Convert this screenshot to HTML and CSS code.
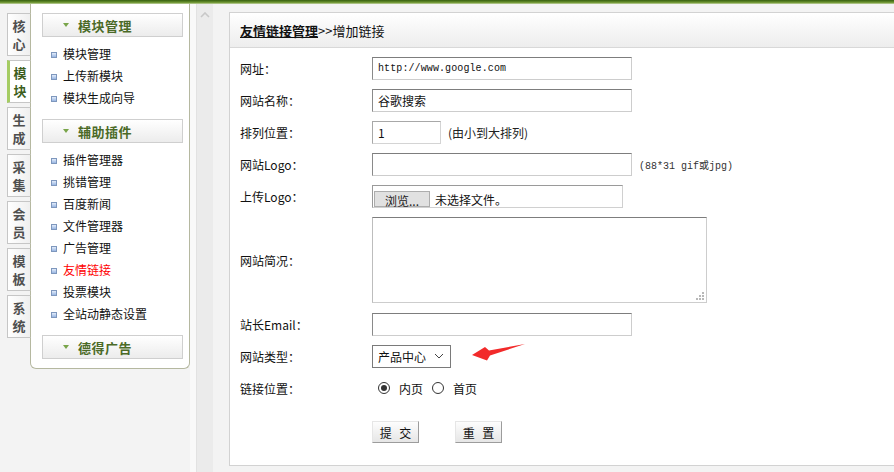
FILE: index.html
```html
<!DOCTYPE html>
<html lang="zh-CN">
<head>
    <meta charset="utf-8">
    <title>增加链接</title>
    <link rel="stylesheet" href="styles.css">
</head>
<body>
    <div class="topbar"></div>

    <div class="layout">
        <div class="side">
            <ul class="tabs">
                <li class="tab"><span>核</span><span>心</span></li>
                <li class="tab active"><span>模</span><span>块</span></li>
                <li class="tab"><span>生</span><span>成</span></li>
                <li class="tab"><span>采</span><span>集</span></li>
                <li class="tab"><span>会</span><span>员</span></li>
                <li class="tab"><span>模</span><span>板</span></li>
                <li class="tab"><span>系</span><span>统</span></li>
            </ul>

            <div class="menu">
                <div class="menu-head"><span class="caret"></span>模块管理</div>
                <ul class="menu-list">
                    <li>模块管理</li>
                    <li>上传新模块</li>
                    <li>模块生成向导</li>
                </ul>

                <div class="menu-head"><span class="caret"></span>辅助插件</div>
                <ul class="menu-list">
                    <li>插件管理器</li>
                    <li>挑错管理</li>
                    <li>百度新闻</li>
                    <li>文件管理器</li>
                    <li>广告管理</li>
                    <li class="current">友情链接</li>
                    <li>投票模块</li>
                    <li>全站动静态设置</li>
                </ul>

                <div class="menu-head"><span class="caret"></span>德得广告</div>
            </div>
        </div>

        <div class="splitter">
            <div class="split-light"></div>
            <div class="split-bar">
                <svg width="10" height="6" viewBox="0 0 10 6"><path d="M1 5 L5 1 L9 5" fill="none" stroke="#c8c8c8" stroke-width="1.6"/></svg>
            </div>
        </div>

        <div class="main">
            <div class="panel-head">
                <a class="crumb" href="#">友情链接管理</a>&gt;&gt;增加链接
            </div>

            <form class="link-form">
                <div class="row">
                    <label>网址：</label>
                    <div class="field"><input class="text mono" type="text" value="http://www.google.com"></div>
                </div>
                <div class="row">
                    <label>网站名称：</label>
                    <div class="field"><input class="text" type="text" value="谷歌搜索"></div>
                </div>
                <div class="row">
                    <label>排列位置：</label>
                    <div class="field"><input class="text short" type="text" value="1"><span class="hint">(由小到大排列)</span></div>
                </div>
                <div class="row">
                    <label>网站Logo：</label>
                    <div class="field"><input class="text" type="text"><span class="hint mono-hint">(88*31 gif或jpg)</span></div>
                </div>
                <div class="row">
                    <label>上传Logo：</label>
                    <div class="field">
                        <div class="file-box">
                            <span class="file-btn">浏览...</span>
                            <span class="file-name">未选择文件。</span>
                        </div>
                    </div>
                </div>
                <div class="row tall">
                    <label>网站简况：</label>
                    <div class="field">
                        <textarea class="area"></textarea>
                        <svg class="grip" width="8" height="8" viewBox="0 0 8 8">
                            <rect x="6" y="0" width="2" height="2" fill="#b8b8b8"/>
                            <rect x="3" y="3" width="2" height="2" fill="#b8b8b8"/>
                            <rect x="6" y="3" width="2" height="2" fill="#b8b8b8"/>
                            <rect x="0" y="6" width="2" height="2" fill="#b8b8b8"/>
                            <rect x="3" y="6" width="2" height="2" fill="#b8b8b8"/>
                            <rect x="6" y="6" width="2" height="2" fill="#b8b8b8"/>
                        </svg>
                    </div>
                </div>
                <div class="row">
                    <label>站长Email：</label>
                    <div class="field"><input class="text" type="text"></div>
                </div>
                <div class="row">
                    <label>网站类型：</label>
                    <div class="field">
                        <div class="select">
                            <span>产品中心</span>
                            <svg width="10" height="6" viewBox="0 0 10 6"><path d="M1 1 L5 5 L9 1" fill="none" stroke="#444" stroke-width="1"/></svg>
                        </div>
                        <svg class="pointer" width="58" height="24" viewBox="0 0 58 24">
                            <path d="M2 14 L15 6 L19 9.5 L55 3 L20 14.5 L17 19.5 Z" fill="#f22a2a"/>
                        </svg>
                    </div>
                </div>
                <div class="row">
                    <label>链接位置：</label>
                    <div class="field radios">
                        <span class="radio checked"></span><span class="radio-text">内页</span>
                        <span class="radio"></span><span class="radio-text">首页</span>
                    </div>
                </div>
                <div class="actions">
                    <button class="btn" type="submit">提 交</button>
                    <button class="btn" type="reset">重 置</button>
                </div>
            </form>
        </div>
    </div>
</body>
</html>
```

FILE: styles.css
```css
body {
    margin: 0;
    background-color: #f3f3f3;
    font-family: "Noto Sans CJK SC", "Liberation Sans", sans-serif;
    font-size: 12px;
    color: #111;
    overflow: hidden;
}

ul {
    list-style: none;
    margin: 0;
    padding: 0;
}

.topbar {
    height: 4px;
    background: linear-gradient(#365f10, #6c9430 60%, #c4d4a4);
}

.layout {
    display: flex;
    align-items: flex-start;
}

/* left column: vertical tabs + menu */
.side {
    display: flex;
    align-items: flex-start;
}

.tabs {
    width: 24px;
    padding: 9px 0 0 7px;
    margin-right: -1px;
    position: relative;
    z-index: 1;
}

.tab {
    box-sizing: border-box;
    height: 43px;
    margin-bottom: 4px;
    padding-top: 3px;
    border: 1px solid #c6c6c6;
    border-right-color: #b5b8a0;
    background: linear-gradient(to right, #ffffff, #efefef);
    color: #4f4f4f;
    font-size: 13px;
    font-weight: bold;
    text-align: center;
}

.tab span {
    display: block;
    height: 18px;
    line-height: 18px;
}

.tab.active {
    border-left: 3px solid #a5cc63;
    background: #fff;
    color: #3d5e1c;
}

.menu {
    box-sizing: border-box;
    width: 160px;
    height: 365px;
    padding: 8px 6px 0 11px;
    background-color: #fff;
    border: 1px solid #b5b8a0;
    border-top: none;
    border-radius: 0 0 6px 6px;
}

.menu-head {
    box-sizing: border-box;
    height: 24px;
    margin-top: 1px;
    padding-left: 20px;
    display: flex;
    align-items: center;
    border: 1px solid #cfcfcf;
    background: linear-gradient(#ffffff, #ececec);
    color: #4b6a27;
    font-size: 13px;
    font-weight: bold;
    letter-spacing: 0.5px;
}

.caret {
    width: 0;
    height: 0;
    margin-right: 9px;
    border-left: 3px solid transparent;
    border-right: 3px solid transparent;
    border-top: 4px solid #79a54a;
}

.menu-list {
    padding: 6px 0 9px;
}

.menu-list li {
    height: 22px;
    line-height: 22px;
    padding-left: 21px;
    position: relative;
    color: #111;
}

.menu-list li::before {
    content: "";
    position: absolute;
    left: 9px;
    top: 9px;
    width: 4px;
    height: 4px;
    border: 1px solid #7e97bd;
    background: linear-gradient(#e2ecfa, #98b6e2);
}

.menu-list li.current {
    color: #f00;
}

/* strip between menu and content */
.splitter {
    display: flex;
    width: 39px;
    height: 470px;
}

.split-light {
    width: 6px;
    background-color: #f9f9f9;
    border-right: 1px solid #e2e2e2;
}

.split-bar {
    width: 16px;
    background-color: #ebebeb;
    display: flex;
    justify-content: center;
    padding-top: 8px;
    box-sizing: border-box;
}

/* content panel */
.main {
    flex: 1;
    box-sizing: border-box;
    height: 454px;
    margin-top: 8px;
    margin-right: -2px;
    background-color: #fff;
    border: 1px solid #d2d2d2;
}

.panel-head {
    box-sizing: border-box;
    height: 35px;
    padding-left: 10px;
    display: flex;
    align-items: center;
    border-bottom: 1px solid #d8d8d8;
    background: linear-gradient(#ffffff, #ededed);
    font-size: 13px;
    color: #111;
}

.crumb {
    color: #111;
    font-weight: bold;
    text-decoration: underline;
}

.link-form {
    padding: 4px 0 0 10px;
}

.row {
    display: flex;
    align-items: center;
    height: 32px;
}

.row.tall {
    height: 96px;
}

.row label {
    width: 132px;
    font-size: 12px;
}

.field {
    display: flex;
    align-items: center;
    position: relative;
}

.text {
    box-sizing: border-box;
    width: 260px;
    height: 23px;
    padding: 0 5px;
    border: 1px solid;
    border-color: #7d7d7d #cdcdcd #cdcdcd #8a8a8a;
    font-family: inherit;
    font-size: 12px;
    color: #111;
    outline: none;
}

.text.short {
    width: 69px;
    border-color: #a8a8a8 #d4d4d4 #d4d4d4 #a8a8a8;
}

.mono {
    font-family: "Liberation Mono", monospace;
    font-size: 10px;
    letter-spacing: 0.1px;
}

.hint {
    margin-left: 7px;
    font-size: 12px;
    color: #222;
}

.mono-hint {
    font-family: "Liberation Mono", monospace;
    font-size: 10px;
    color: #333;
}

.file-box {
    box-sizing: border-box;
    width: 251px;
    height: 23px;
    border: 1px solid;
    border-color: #9a9a9a #d0d0d0 #d0d0d0 #9a9a9a;
    display: flex;
    align-items: flex-start;
    padding: 5px 0 0 1px;
}

.file-btn {
    box-sizing: border-box;
    width: 56px;
    height: 16px;
    border: 1px solid #adadad;
    background-color: #e1e1e1;
    font-size: 12px;
    line-height: 17px;
    text-align: center;
    color: #222;
}

.file-name {
    margin-left: 5px;
    font-size: 12px;
    line-height: 17px;
}

.area {
    box-sizing: border-box;
    width: 335px;
    height: 86px;
    border: 1px solid;
    border-color: #7d7d7d #cdcdcd #cdcdcd #bdbdbd;
    resize: none;
    outline: none;
}

.grip {
    position: absolute;
    right: 3px;
    bottom: 3px;
}

.select {
    box-sizing: border-box;
    width: 79px;
    height: 23px;
    padding: 0 6px 0 5px;
    border: 1px solid #7a7a7a;
    display: flex;
    align-items: center;
    justify-content: space-between;
    background-color: #fff;
    font-size: 12px;
}

.pointer {
    position: absolute;
    left: 98px;
    top: -4px;
}

.radios {
    padding-left: 6px;
}

.radio {
    box-sizing: border-box;
    width: 12px;
    height: 12px;
    border: 1px solid #333;
    border-radius: 50%;
    background-color: #fff;
    position: relative;
}

.radio.checked {
    border-width: 1.5px;
}

.radio.checked::after {
    content: "";
    position: absolute;
    left: 1.5px;
    top: 1.5px;
    width: 6px;
    height: 6px;
    border-radius: 50%;
    background-color: #333;
}

.radio-text {
    margin: 0 9px 0 9px;
    font-size: 12px;
}

.actions {
    padding: 17px 0 0 132px;
    display: flex;
    gap: 36px;
}

.btn {
    box-sizing: border-box;
    width: 47px;
    height: 22px;
    padding: 0;
    border: 1px solid;
    border-color: #e6e6e6 #9c9c9c #9c9c9c #e6e6e6;
    background: linear-gradient(#fdfdfd, #e6e6e6);
    font-family: inherit;
    font-size: 12px;
    word-spacing: 5px;
    color: #111;
}
```
